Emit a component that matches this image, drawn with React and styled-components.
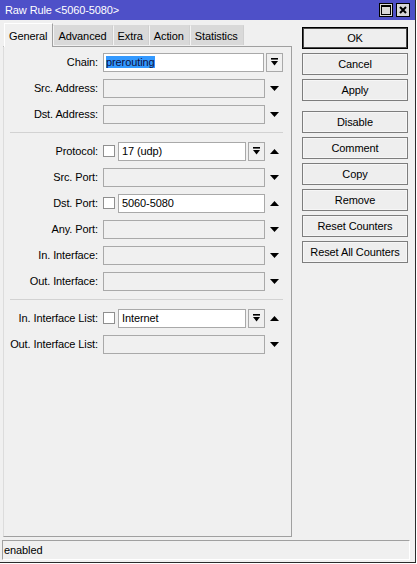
import React from "react";
import styled, { createGlobalStyle } from "styled-components";

const GlobalStyle = createGlobalStyle`
  html, body {
    margin: 0;
    padding: 0;
    background: #ffffff;
  }
  body {
    font-family: "Liberation Sans", Arial, sans-serif;
    font-size: 11px;
    letter-spacing: -0.1px;
    color: #000;
  }
`;

const Window = styled.div`
  width: 416px;
  height: 563px;
  box-sizing: border-box;
  display: flex;
  flex-direction: column;
  background: #f0f0f0;
  border-right: 1px solid #2b2b2b;
  border-bottom: 1px solid #2b2b2b;
`;

const TitleBar = styled.div`
  flex: none;
  height: 20px;
  display: flex;
  align-items: center;
  padding: 0 5px;
  background: #4e50c8;
  color: #fff;
  font-size: 11px;
`;

const TitleButtons = styled.div`
  display: flex;
  gap: 3px;
  margin-left: auto;
`;

const TitleButton = styled.div`
  width: 14px;
  height: 14px;
  box-sizing: border-box;
  border: 1px solid #000;
  background: #d8d8d8;
  display: grid;
  place-items: center;
`;

const Main = styled.div`
  flex: 1;
  min-height: 0;
  display: flex;
  padding: 3px 0 0 3px;
`;

const LeftColumn = styled.div`
  width: 289px;
  display: flex;
  flex-direction: column;
`;

const TabStrip = styled.div`
  flex: none;
  height: 23px;
  display: flex;
  align-items: flex-end;
  padding-left: 1px;
`;

const Tab = styled.div`
  box-sizing: border-box;
  height: ${(p) => (p.$active ? "24px" : "20px")};
  margin-bottom: ${(p) => (p.$active ? "-1px" : "1px")};
  padding: 0 5px 0 4px;
  display: flex;
  align-items: center;
  position: relative;
  z-index: ${(p) => (p.$active ? 1 : 0)};
  background: ${(p) => (p.$active ? "#f0f0f0" : "#d9d9d9")};
  border-top: 1px solid ${(p) => (p.$active ? "#ffffff" : "#d9d9d9")};
  border-left: 1px solid ${(p) => (p.$active ? "#ffffff" : "#f4f4f4")};
  border-right: 1px solid ${(p) => (p.$active ? "#a0a0a0" : "#d0d0d0")};
`;

const Panel = styled.div`
  flex: 1;
  box-sizing: border-box;
  border: 1px solid #a0a0a0;
  border-left-color: #dcdcdc;
  padding-top: 2px;
`;

const Section = styled.div`
  display: grid;
  grid-template-columns: 94px 180px;
  grid-auto-rows: 26px;
  column-gap: 5px;
  align-items: center;
`;

const Divider = styled.div`
  width: 273px;
  height: 1px;
  margin: 5px 0 5px 6px;
  background: #d2d2d2;
`;

const Label = styled.div`
  text-align: right;
  white-space: nowrap;
`;

const Field = styled.div`
  display: flex;
  align-items: center;
`;

const Checkbox = styled.span`
  flex: none;
  width: 12px;
  height: 12px;
  box-sizing: border-box;
  margin-right: 3px;
  border: 1px solid #8f8f8f;
  background: #fff;
`;

const Input = styled.div`
  flex: 1;
  min-width: 0;
  height: 19px;
  box-sizing: border-box;
  border: 1px solid #a9a9a9;
  background: ${(p) => (p.$filled ? "#ffffff" : "#f0f0f0")};
  padding-left: ${(p) => p.$pad}px;
  line-height: 17px;
  white-space: nowrap;
  overflow: hidden;
`;

const Selected = styled.span`
  background: #3399ff;
  color: #101040;
`;

const DropButton = styled.div`
  flex: none;
  width: 17px;
  height: 19px;
  box-sizing: border-box;
  margin-left: 2px;
  border: 1px solid #a9a9a9;
  background: #f0f0f0;
  display: grid;
  place-items: center;
`;

const ArrowSlot = styled.div`
  flex: none;
  width: 18px;
  display: grid;
  place-items: center;
`;

const ButtonColumn = styled.div`
  width: 106px;
  margin-left: 10px;
  padding-top: 4px;
  display: flex;
  flex-direction: column;
  gap: 4px;
`;

const Button = styled.div`
  height: 22px;
  box-sizing: border-box;
  margin-top: ${(p) => (p.$gapBefore ? "6px" : "0")};
  border: 1px solid ${(p) => (p.$default ? "#000" : "#7d7d7d")};
  box-shadow: ${(p) => (p.$default ? "inset 0 0 0 1px #4a4a4a" : "inset 0 0 0 1px #f6f6f6")};
  background: #eeeeee;
  display: flex;
  align-items: center;
  justify-content: center;
  white-space: nowrap;
`;

const StatusBar = styled.div`
  flex: none;
  height: 20px;
  box-sizing: border-box;
  margin: 3px 5px 2px 2px;
  padding-left: 1px;
  border-top: 1px solid #a0a0a0;
  border-left: 1px solid #a0a0a0;
  border-right: 1px solid #ffffff;
  border-bottom: 1px solid #ffffff;
  line-height: 18px;
`;

const DropIcon = () => (
  <svg width="7" height="8" viewBox="0 0 7 8">
    <rect x="0" y="0" width="7" height="1.6" fill="#000" />
    <polygon points="0,3 7,3 3.5,7.5" fill="#000" />
  </svg>
);

const Arrow = ({ up }) => (
  <svg width="9" height="5" viewBox="0 0 9 5">
    <polygon points={up ? "0,5 9,5 4.5,0" : "0,0 9,0 4.5,5"} fill="#000" />
  </svg>
);

const Row = ({ label, check, value, selected, drop, arrow }) => (
  <>
    <Label>{label}</Label>
    <Field>
      {check && <Checkbox />}
      <Input $filled={value !== undefined} $pad={check ? 3 : 2}>
        {selected ? <Selected>{value}</Selected> : value}
      </Input>
      {drop && (
        <DropButton>
          <DropIcon />
        </DropButton>
      )}
      {arrow && (
        <ArrowSlot>
          <Arrow up={arrow === "up"} />
        </ArrowSlot>
      )}
    </Field>
  </>
);

const tabs = ["General", "Advanced", "Extra", "Action", "Statistics"];

const buttons = [
  { label: "OK", isDefault: true },
  { label: "Cancel" },
  { label: "Apply" },
  { label: "Disable", gap: true },
  { label: "Comment" },
  { label: "Copy" },
  { label: "Remove" },
  { label: "Reset Counters" },
  { label: "Reset All Counters" },
];

export default function App() {
  return (
    <>
      <GlobalStyle />
      <Window>
        <TitleBar>
          <span>Raw Rule &lt;5060-5080&gt;</span>
          <TitleButtons>
            <TitleButton>
              <svg width="10" height="10" viewBox="0 0 10 10">
                <rect x="0.5" y="0.5" width="9" height="9" fill="none" stroke="#000" />
                <rect x="0" y="0" width="10" height="2" fill="#000" />
              </svg>
            </TitleButton>
            <TitleButton>
              <svg width="8" height="8" viewBox="0 0 8 8">
                <path d="M1 1 L7 7 M7 1 L1 7" stroke="#000" strokeWidth="2" />
              </svg>
            </TitleButton>
          </TitleButtons>
        </TitleBar>

        <Main>
          <LeftColumn>
            <TabStrip>
              {tabs.map((t, i) => (
                <Tab key={t} $active={i === 0}>
                  {t}
                </Tab>
              ))}
            </TabStrip>
            <Panel>
              <Section>
                <Row label="Chain:" value="prerouting" selected drop />
                <Row label="Src. Address:" arrow="down" />
                <Row label="Dst. Address:" arrow="down" />
              </Section>
              <Divider />
              <Section>
                <Row label="Protocol:" check value="17 (udp)" drop arrow="up" />
                <Row label="Src. Port:" arrow="down" />
                <Row label="Dst. Port:" check value="5060-5080" arrow="up" />
                <Row label="Any. Port:" arrow="down" />
                <Row label="In. Interface:" arrow="down" />
                <Row label="Out. Interface:" arrow="down" />
              </Section>
              <Divider />
              <Section>
                <Row label="In. Interface List:" check value="Internet" drop arrow="up" />
                <Row label="Out. Interface List:" arrow="down" />
              </Section>
            </Panel>
          </LeftColumn>

          <ButtonColumn>
            {buttons.map((b) => (
              <Button key={b.label} $default={b.isDefault} $gapBefore={b.gap}>
                {b.label}
              </Button>
            ))}
          </ButtonColumn>
        </Main>

        <StatusBar>enabled</StatusBar>
      </Window>
    </>
  );
}
